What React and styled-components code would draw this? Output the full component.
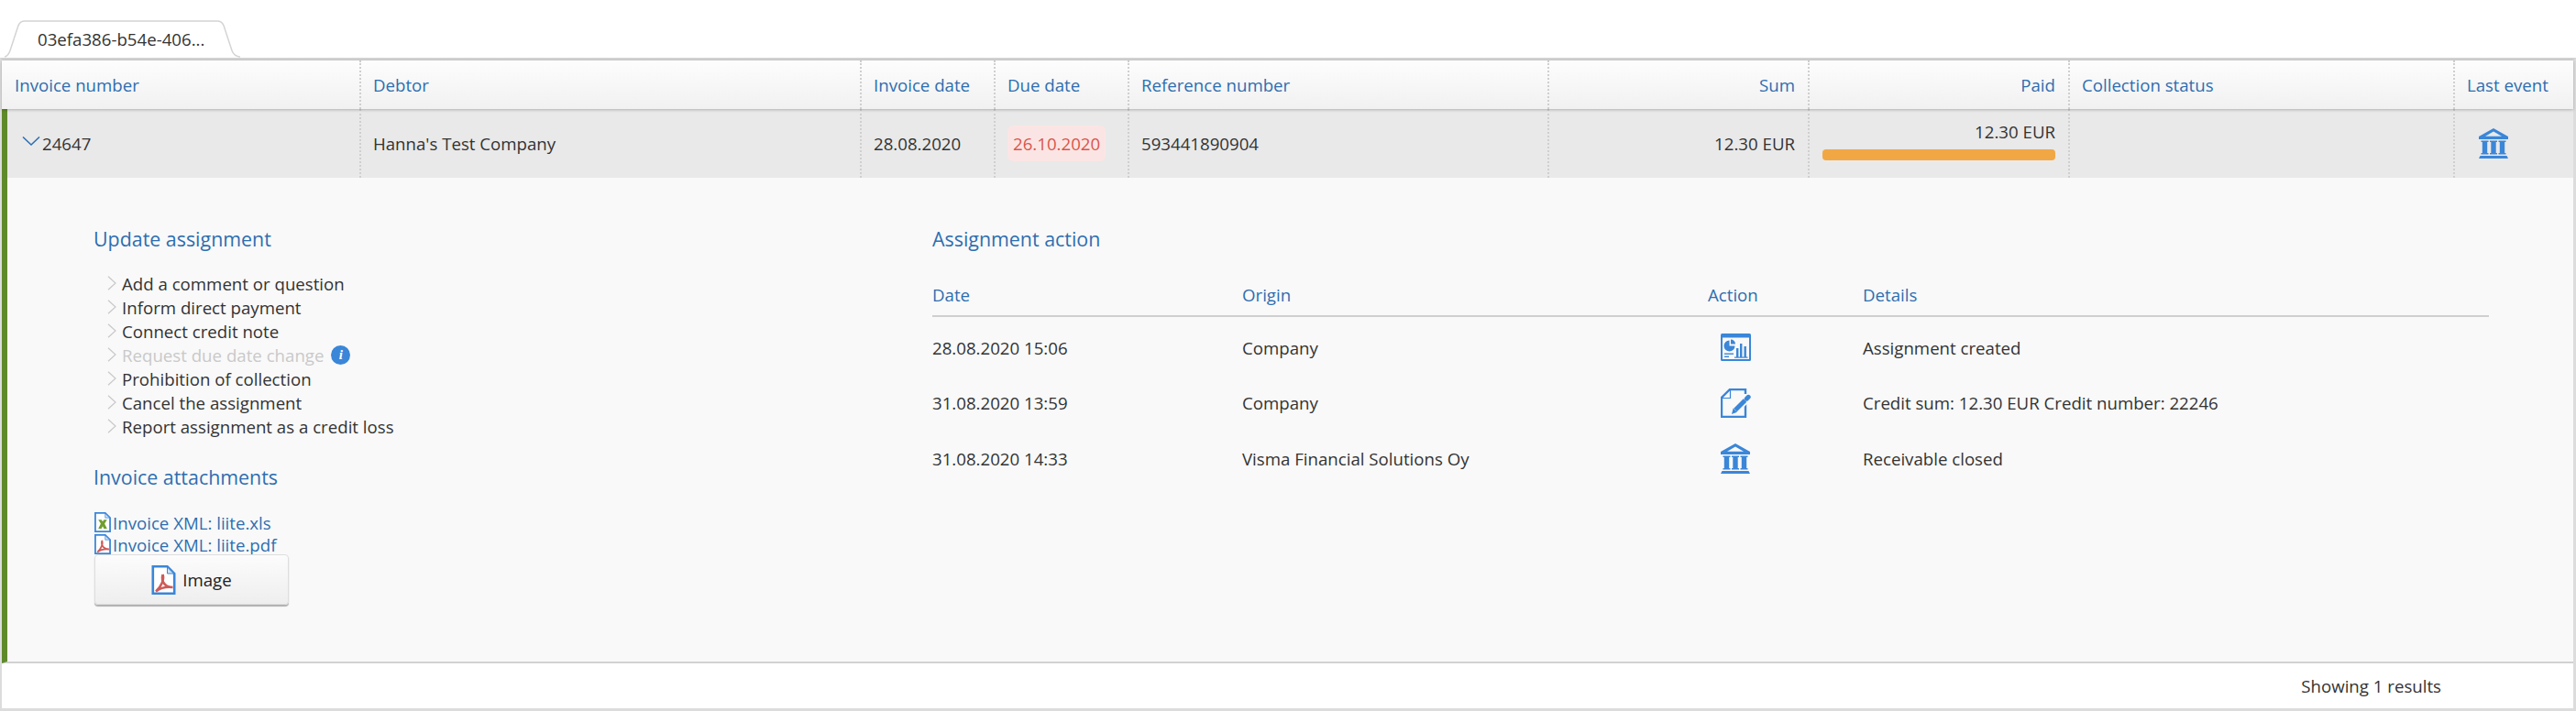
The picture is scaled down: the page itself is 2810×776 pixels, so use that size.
import React from "react";
import styled, { createGlobalStyle } from "styled-components";

const GlobalStyle = createGlobalStyle`
  html, body {
    margin: 0;
    padding: 0;
    background: #fff;
    overflow: hidden;
  }
  body {
    font-family: "Open Sans", "Liberation Sans", sans-serif;
    font-size: 18.67px;
    color: #333;
  }
  * { box-sizing: border-box; }
`;

const columns = [
  { title: "Invoice number" },
  { title: "Debtor" },
  { title: "Invoice date" },
  { title: "Due date" },
  { title: "Reference number" },
  { title: "Sum", right: true },
  { title: "Paid", right: true },
  { title: "Collection status" },
  { title: "Last event" },
];

const GRID = "392px 546px 146px 146px 458px 284px 284px 420px 1fr";

const actions = [
  { date: "28.08.2020 15:06", origin: "Company", icon: "dashboard", details: "Assignment created" },
  { date: "31.08.2020 13:59", origin: "Company", icon: "note", details: "Credit sum: 12.30 EUR Credit number: 22246" },
  { date: "31.08.2020 14:33", origin: "Visma Financial Solutions Oy", icon: "bank", details: "Receivable closed" },
];

const updateLinks = [
  { label: "Add a comment or question" },
  { label: "Inform direct payment" },
  { label: "Connect credit note" },
  { label: "Request due date change", disabled: true },
  { label: "Prohibition of collection" },
  { label: "Cancel the assignment" },
  { label: "Report assignment as a credit loss" },
];

// icons
function BankIcon() {
  return (
    <svg width="32" height="33" viewBox="0 0 32 33" fill="#3a86d8">
      <path d="M16 0 L32 9 V12 H0 V9 Z M16 3.5 L7 8.8 H25 Z" fillRule="evenodd" />
      <path d="M2.5 13.5 H10.5 V15 H9.2 V27 H10.5 V28.5 H2.5 V27 H3.8 V15 H2.5 Z" />
      <path d="M12 13.5 H20 V15 H18.7 V27 H20 V28.5 H12 V27 H13.3 V15 H12 Z" />
      <path d="M21.5 13.5 H29.5 V15 H28.2 V27 H29.5 V28.5 H21.5 V27 H22.8 V15 H21.5 Z" />
      <path d="M1.5 30 H30.5 L32 33 H0 Z" />
    </svg>
  );
}

function DashboardIcon() {
  return (
    <svg width="33" height="30" viewBox="0 0 33 30">
      <rect x="0" y="0" width="33" height="30" rx="1.5" fill="#3a86d8" />
      <rect x="2" y="4.5" width="29" height="23.5" fill="#f9f9f9" />
      <path d="M9.5 7.5 A6 6 0 1 0 15.5 13.5 H9.5 Z" fill="#3a86d8" />
      <path d="M11 6.5 A5 5 0 0 1 16 11.5 H11 Z" fill="#3a86d8" />
      <rect x="17" y="16" width="2.4" height="10" fill="#3a86d8" />
      <rect x="21" y="11" width="2.4" height="15" fill="#3a86d8" />
      <rect x="25.5" y="14" width="2.4" height="12" fill="#3a86d8" />
      <rect x="15" y="25.5" width="14.5" height="1.2" fill="#3a86d8" />
      <rect x="4" y="21.5" width="10" height="1.4" fill="#3a86d8" />
      <rect x="4" y="24.6" width="5" height="1.4" fill="#3a86d8" />
    </svg>
  );
}

function NoteIcon() {
  return (
    <svg width="33" height="32" viewBox="0 0 33 32" fill="none">
      <path d="M27 14 V31 H1 V10 L10 1 H27 V6" stroke="#3a86d8" strokeWidth="2.4" />
      <path d="M2 10.5 H10.5 V2" stroke="#3a86d8" strokeWidth="1.2" />
      <path d="M15 25 L29 11" stroke="#f9f9f9" strokeWidth="8" />
      <path d="M16 23.5 L26.5 13" stroke="#3a86d8" strokeWidth="5" />
      <path d="M28.3 11.2 L30.2 9.3" stroke="#3a86d8" strokeWidth="5" strokeLinecap="round" />
      <path d="M13.6 21.6 L18 25.8 L12 28 Z" fill="#3a86d8" />
    </svg>
  );
}

function FileIcon({ kind, width, height }) {
  return (
    <svg width={width} height={height} viewBox="0 0 26 32" fill="none">
      <path d="M1.3 1.3 H17 L24.7 9 V30.7 H1.3 Z" fill="#fff" stroke="#3a86d8" strokeWidth="2.6" />
      <path d="M17 2 V9 H24 Z" stroke="#3a86d8" strokeWidth="1" fill="#cfe2f6" />
      {kind === "pdf" && (
        <path
          d="M12 10 C10.6 15 12 18.5 14.5 21 C16.5 23 19.5 24 23 24 M12 10 C13.8 15 11 23 4.5 28.5 M4.5 28.5 C9 25 15 23 23 24"
          stroke="#cf5a5a"
          strokeWidth="2.6"
        />
      )}
      {kind === "xls" && (
        <path d="M6 12 H11 L13 15 L15 12 H20 L16 18 L20 26 H15 L13 22 L11 26 H6 L10 18 Z" fill="#6f9e2c" />
      )}
    </svg>
  );
}

function ActionIcon({ name }) {
  if (name === "dashboard") return <DashboardIcon />;
  if (name === "note") return <NoteIcon />;
  return <BankIcon />;
}

export default function App() {
  return (
    <Page>
      <GlobalStyle />
      <TabBar>
        <Tab>
          <TabShape viewBox="0 0 257 42" preserveAspectRatio="none">
            <path d="M0 41 Q4 40 6 34 L15 6 Q17 1 22 1 H232 Q237 1 239 6 L248 34 Q250 40 257 41" fill="#fff" stroke="#d4d4d4" strokeWidth="1.5" />
          </TabShape>
          <TabLabel>03efa386-b54e-406...</TabLabel>
        </Tab>
      </TabBar>

      <Frame>
        <HeaderRow>
          {columns.map((col) => (
            <HeaderCell key={col.title} $right={col.right}>{col.title}</HeaderCell>
          ))}
        </HeaderRow>

        <Expanded>
          <DataRow>
            <DataCell>
              <Chevron width="20" height="10" viewBox="0 0 20 10">
                <path d="M1 0.5 L10 9 L19 0.5" fill="none" stroke="#2e6eb0" strokeWidth="1.5" />
              </Chevron>
              24647
            </DataCell>
            <DataCell>Hanna's Test Company</DataCell>
            <DataCell>28.08.2020</DataCell>
            <DataCell>
              <DueBadge>26.10.2020</DueBadge>
            </DataCell>
            <DataCell>593441890904</DataCell>
            <DataCell $right>12.30 EUR</DataCell>
            <PaidCell>
              <span>12.30 EUR</span>
              <PaidBar />
            </PaidCell>
            <DataCell />
            <EventCell>
              <BankIcon />
            </EventCell>
          </DataRow>

          <Details>
            <LeftColumn>
              <SectionTitle>Update assignment</SectionTitle>
              <LinkList>
                {updateLinks.map((link) => (
                  <LinkItem key={link.label} $disabled={link.disabled}>
                    <svg width="10" height="16" viewBox="0 0 10 16">
                      <path d="M1 0.7 L9 8 L1 15.3" fill="none" stroke="#c9c9c9" strokeWidth="1.2" />
                    </svg>
                    {link.label}
                    {link.disabled && <InfoBadge>i</InfoBadge>}
                  </LinkItem>
                ))}
              </LinkList>

              <AttachmentTitle>Invoice attachments</AttachmentTitle>
              <Attachments>
                <Attachment>
                  <FileIcon kind="xls" width={18} height={22} />
                  Invoice XML: liite.xls
                </Attachment>
                <Attachment>
                  <FileIcon kind="pdf" width={18} height={22} />
                  Invoice XML: liite.pdf
                </Attachment>
              </Attachments>
              <ImageButton type="button">
                <FileIcon kind="pdf" width={27} height={32} />
                Image
              </ImageButton>
            </LeftColumn>

            <RightColumn>
              <SectionTitle>Assignment action</SectionTitle>
              <ActionHead>
                <span>Date</span>
                <span>Origin</span>
                <span>Action</span>
                <span>Details</span>
              </ActionHead>
              <ActionRows>
                {actions.map((a) => (
                  <ActionRow key={a.date}>
                    <span>{a.date}</span>
                    <span>{a.origin}</span>
                    <IconSlot>
                      <ActionIcon name={a.icon} />
                    </IconSlot>
                    <span>{a.details}</span>
                  </ActionRow>
                ))}
              </ActionRows>
            </RightColumn>
          </Details>
        </Expanded>

        <Footer>Showing 1 results</Footer>
      </Frame>
    </Page>
  );
}

const Page = styled.div`
  width: 2810px;
  height: 776px;
  display: flex;
  flex-direction: column;
`;

const TabBar = styled.div`
  height: 63px;
  padding: 22px 0 0 5px;
  flex: none;
`;

const Tab = styled.div`
  position: relative;
  width: 257px;
  height: 41px;
`;

const TabShape = styled.svg`
  position: absolute;
  inset: 0;
  width: 100%;
  height: 100%;
`;

const TabLabel = styled.span`
  position: relative;
  display: block;
  padding: 9px 0 0 36px;
  font-size: 18.67px;
  line-height: 24px;
`;

const Frame = styled.div`
  flex: 1;
  display: flex;
  flex-direction: column;
  border-top: 3px solid #d2d2d2;
  border-left: 2px solid #dcdcdc;
  border-right: 3px solid #dcdcdc;
  border-bottom: 3px solid #dcdcdc;
`;

const HeaderRow = styled.div`
  display: grid;
  grid-template-columns: ${GRID};
  height: 53px;
  flex: none;
  background: linear-gradient(#fdfdfd, #f1f1f1);
  box-shadow: 0 1px 3px rgba(0, 0, 0, 0.25);
  position: relative;
`;

const HeaderCell = styled.div`
  display: flex;
  align-items: center;
  justify-content: ${(p) => (p.$right ? "flex-end" : "flex-start")};
  padding: 0 14px 0 13px;
  color: #2e6eb0;
  border-right: 2px dotted #cfcfcf;
  &:first-child { padding-left: 14px; }
  &:last-child { border-right: 0; }
`;

const Expanded = styled.div`
  flex: 1;
  display: flex;
  flex-direction: column;
  border-left: 6px solid #5f8a2b;
  border-bottom: 2px solid #d2d2d2;
`;

const DataRow = styled.div`
  display: grid;
  grid-template-columns: 386px 546px 146px 146px 458px 284px 284px 420px 1fr;
  height: 75px;
  flex: none;
  background: #e9e9e9;
`;

const DataCell = styled.div`
  display: flex;
  align-items: center;
  justify-content: ${(p) => (p.$right ? "flex-end" : "flex-start")};
  padding: 0 14px 0 13px;
  border-right: 2px dotted #cfcfcf;
  color: #333;
`;

const Chevron = styled.svg`
  margin: 0 2px 5px 3px;
  flex: none;
`;

const DueBadge = styled.span`
  background: #fbe5e4;
  color: #d9564a;
  border-radius: 6px;
  padding: 7px 6px;
  line-height: 25px;
`;

const PaidCell = styled(DataCell)`
  flex-direction: column;
  align-items: stretch;
  justify-content: flex-start;
  text-align: right;
  padding-top: 13px;
  padding-left: 14px;
  line-height: 24px;
`;

const PaidBar = styled.div`
  height: 12px;
  margin-top: 7px;
  background: #f2a745;
  border-radius: 4px;
`;

const EventCell = styled(DataCell)`
  border-right: 0;
  padding-left: 26px;
`;

const Details = styled.div`
  flex: 1;
  background: #f9f9f9;
  display: grid;
  grid-template-columns: 915px 1698px;
  padding: 52px 0 0 94px;
`;

const LeftColumn = styled.div`
  display: flex;
  flex-direction: column;
  align-items: flex-start;
`;

const RightColumn = styled.div`
  display: flex;
  flex-direction: column;
`;

const SectionTitle = styled.h3`
  margin: 0;
  font-size: 21.4px;
  line-height: 30px;
  font-weight: 400;
  color: #2e6eb0;
`;

const LinkList = styled.ul`
  list-style: none;
  margin: 20px 0 0;
  padding: 0;
`;

const LinkItem = styled.li`
  display: flex;
  align-items: center;
  height: 26px;
  padding-left: 15px;
  gap: 6px;
  color: ${(p) => (p.$disabled ? "#c9c9c9" : "#333")};
`;

const InfoBadge = styled.span`
  width: 21px;
  height: 21px;
  margin-left: 2px;
  border-radius: 50%;
  background: #3a86d8;
  color: #fff;
  font: italic 700 15px/21px "Liberation Serif", serif;
  text-align: center;
`;

const AttachmentTitle = styled(SectionTitle)`
  margin-top: 28px;
`;

const Attachments = styled.div`
  margin-top: 22px;
  display: flex;
  flex-direction: column;
`;

const Attachment = styled.a`
  display: flex;
  align-items: center;
  height: 24px;
  gap: 2px;
  padding-left: 1px;
  color: #2e6eb0;
`;

const ImageButton = styled.button`
  display: flex;
  align-items: center;
  justify-content: center;
  gap: 7px;
  width: 212px;
  height: 55px;
  margin: -1px 0 0 1px;
  background: linear-gradient(#fcfcfc, #eeeeee);
  border: 1px solid #dedede;
  border-radius: 4px;
  box-shadow: 0 2px 1px #b0b0b0;
  font: inherit;
  color: #222;
`;

const actionGrid = "338px 508px 169px 1fr";

const ActionHead = styled.div`
  display: grid;
  grid-template-columns: ${actionGrid};
  align-items: center;
  height: 47px;
  margin-top: 23px;
  color: #2e6eb0;
  border-bottom: 2px solid #cfcfcf;
`;

const ActionRows = styled.div`
  padding-top: 3px;
`;

const ActionRow = styled.div`
  display: grid;
  grid-template-columns: ${actionGrid};
  align-items: center;
  height: 60.5px;
`;

const IconSlot = styled.div`
  display: flex;
  align-items: center;
  padding-left: 14px;
`;

const Footer = styled.div`
  height: 49px;
  flex: none;
  display: flex;
  align-items: center;
  justify-content: flex-end;
  padding-right: 144px;
`;
